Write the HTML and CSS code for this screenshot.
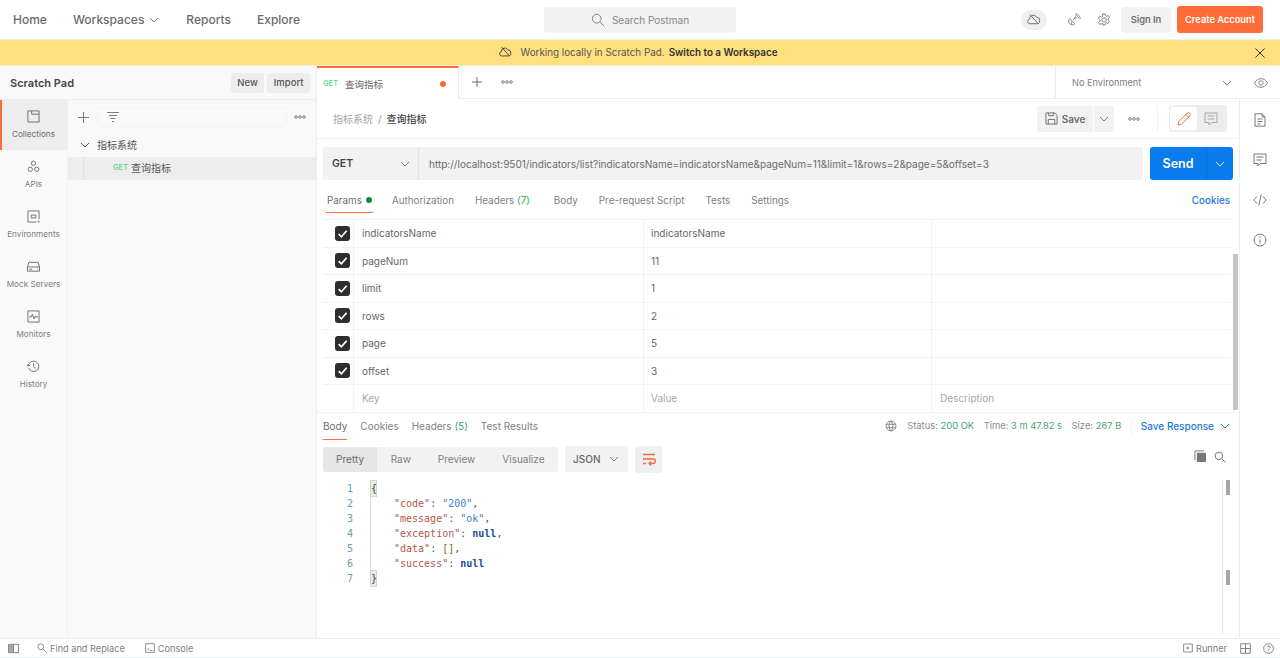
FILE: index.html
```html
<!DOCTYPE html>
<html lang="en">
<head>
<meta charset="utf-8">
<title>Postman</title>
<link rel="stylesheet" href="styles.css">
</head>
<body>
<div class="app">
  <header class="topbar">
    <nav class="topnav">
      <span class="navitem home">Home</span>
      <span class="navitem ws">Workspaces
        <svg class="chev10" viewBox="0 0 10 10"><path d="M1 3l4 4 4-4"/></svg>
      </span>
      <span class="navitem reports">Reports</span>
      <span class="navitem">Explore</span>
    </nav>
    <div class="search">
      <svg class="ic16" viewBox="0 0 16 16"><circle cx="6.5" cy="6.5" r="5"/><path d="M10.2 10.2l5 5"/></svg>
      <span>Search Postman</span>
    </div>
    <div class="topright">
      <span class="cloudpill">
        <svg class="ic16" viewBox="0 0 16 16"><path d="M4 12.500H3a2.500 2.500 0 0 1-.4-4.900A4.200 4.200 0 0 1 6.500 3.500c1.600 0 2.900.8 3.600 2a3.400 3.400 0 0 1 3.400 3.500 3.400 3.400 0 0 1-1.500 3.500H4zM3 2.500l9 10"/></svg>
      </span>
      <svg class="ic16 sat" viewBox="0 0 16 16"><path d="M3 6.500l6 6c-2 1.800-5 1.300-6.300-.6C1.500 10.200 1.500 8 3 6.500zM6 9.500l-2 4M7 8l2-2.500"/><path d="M9.500 2.500c2 .3 3.700 2 4 4M9.500 .8c3 .3 5.400 2.700 5.700 5.700"/><circle cx="9.500" cy="5.500" r="1"/></svg>
      <svg class="ic16 gear" viewBox="0 0 16 16"><circle cx="8" cy="8" r="2.500"/><path d="M6.700 1h2.600l.4 2 1.300.7 1.900-.7 1.300 2.300-1.500 1.300v1.600l1.500 1.300-1.300 2.300-1.900-.7-1.300.7-.4 2H6.700l-.4-2L5 12.300l-1.900.7-1.300-2.300 1.500-1.300V7.800L1.800 6.300l1.300-2.300 1.900.7 1.300-.7z"/></svg>
      <span class="signin">Sign In</span>
      <span class="create">Create Account</span>
    </div>
  </header>

  <div class="banner">
    <div class="banner-msg">
      <svg class="ic16 dark" viewBox="0 0 16 16"><path d="M4 12.500H3a2.500 2.500 0 0 1-.4-4.900A4.200 4.200 0 0 1 6.500 3.500c1.600 0 2.900.8 3.600 2a3.400 3.400 0 0 1 3.400 3.500 3.400 3.400 0 0 1-1.500 3.500H4zM3 2.500l9 10"/></svg>
      <span class="banner-text">Working locally in Scratch Pad.</span>
      <b>Switch to a Workspace</b>
    </div>
    <svg class="banner-x" viewBox="0 0 10 10"><path d="M.5.500l9 9M9.500.500l-9 9"/></svg>
  </div>

  <div class="body">
    <aside class="sidebar">
      <div class="side-head">
        <span class="side-title">Scratch Pad</span>
        <span class="mini-btn">New</span>
        <span class="mini-btn">Import</span>
      </div>
      <div class="side-main">
        <div class="rail">
          <div class="rail-item active">
            <svg class="ic14" viewBox="0 0 14 14"><path d="M1 1h12v12H1zM5 1v3.500h8"/></svg>
            <span>Collections</span>
          </div>
          <div class="rail-item">
            <svg class="ic14" viewBox="0 0 14 14"><circle cx="7" cy="3.500" r="2.300"/><circle cx="3.500" cy="10" r="2.300"/><circle cx="10.500" cy="10" r="2.300"/></svg>
            <span>APIs</span>
          </div>
          <div class="rail-item">
            <svg class="ic14" viewBox="0 0 14 14"><path d="M10 13H1V1h12v9M4.500 5.500h5v3h-5z"/><circle cx="12.500" cy="12.500" r="1" class="fill"/></svg>
            <span>Environments</span>
          </div>
          <div class="rail-item">
            <svg class="ic14" viewBox="0 0 14 14"><path d="M.5 7.500l1.500-5h10l1.500 5v4.500H.5zM.5 7.500h13M2.500 10h3M11 9.800h.5"/></svg>
            <span>Mock Servers</span>
          </div>
          <div class="rail-item">
            <svg class="ic14" viewBox="0 0 14 14"><path d="M1 1h12v12H1zM2.500 7.500h2l1.200-3 2 5 1.300-3 .8 1h2"/></svg>
            <span>Monitors</span>
          </div>
          <div class="rail-item">
            <svg class="ic14" viewBox="0 0 14 14"><path d="M1.800 8.500A5.600 5.600 0 1 0 2.500 3.700L1 6.500M0 4.500l1 2 2.500-.8M7 3.500V7l2.500 2"/></svg>
            <span>History</span>
          </div>
        </div>
        <div class="tree">
          <div class="tree-tools">
            <svg class="plus" viewBox="0 0 12 12"><path d="M6 0v12M0 6h12"/></svg>
            <div class="filter">
              <svg class="ic12" viewBox="0 0 12 12"><path d="M0 1.500h12M2 4.500h8M3.500 7.500h5M5 10.500h2"/></svg>
            </div>
            <svg class="dots" viewBox="0 0 12 4"><circle cx="2" cy="2" r="1.300"/><circle cx="6" cy="2" r="1.300"/><circle cx="10" cy="2" r="1.300"/></svg>
          </div>
          <div class="tree-folder">
            <svg class="chev10 darker" viewBox="0 0 10 10"><path d="M1 3l4 4 4-4"/></svg>
            <span>指标系统</span>
          </div>
          <div class="tree-req">
            <span class="get">GET</span>
            <span>查询指标</span>
          </div>
        </div>
      </div>
    </aside>

    <main class="center">
      <div class="tabbar">
        <div class="tab">
          <span class="get">GET</span>
          <span class="tab-name">查询指标</span>
          <span class="tab-dot"></span>
        </div>
        <svg class="plus tab-plus" viewBox="0 0 12 12"><path d="M6 1v10M1 6h10"/></svg>
        <svg class="dots" viewBox="0 0 12 4"><circle cx="2" cy="2" r="1.300"/><circle cx="6" cy="2" r="1.300"/><circle cx="10" cy="2" r="1.300"/></svg>
        <div class="env">
          <span>No Environment</span>
          <svg class="chev10" viewBox="0 0 10 10"><path d="M1 3l4 4 4-4"/></svg>
        </div>
        <div class="env-eye">
          <svg class="ic14 wide" viewBox="0 0 14 14"><path d="M.5 7C2 4 4.300 2.700 7 2.700S12 4 13.500 7C12 10 9.700 11.300 7 11.300S2 10 .5 7z"/><circle cx="7" cy="7" r="2.200"/></svg>
        </div>
      </div>

      <div class="workspace">
        <div class="req">
          <div class="crumbs">
            <span class="crumb-muted">指标系统</span>
            <span class="crumb-sep">/</span>
            <span class="crumb-cur">查询指标</span>
            <div class="crumb-actions">
              <span class="save">
                <svg class="ic14" viewBox="0 0 14 14"><path d="M1 1h9.500L13 3.500V13H1zM3.500 13V8h7v5M4 1v3h5V1"/></svg>
                Save
              </span>
              <span class="save-more"><svg class="chev10" viewBox="0 0 10 10"><path d="M1 3l4 4 4-4"/></svg></span>
              <svg class="dots crumb-dots" viewBox="0 0 12 4"><circle cx="2" cy="2" r="1.300"/><circle cx="6" cy="2" r="1.300"/><circle cx="10" cy="2" r="1.300"/></svg>
              <span class="crumb-divider"></span>
              <div class="modes">
                <span class="mode on"><svg class="ic14 orange" viewBox="0 0 14 14"><path d="M1 13l.8-3.500L10 1.300a1.500 1.500 0 0 1 2.700 2.700L4.500 12.200zM8.800 2.500l2.700 2.700"/></svg></span>
                <span class="mode"><svg class="ic14 pale" viewBox="0 0 14 14"><path d="M1 1h12v9.500H7.500L5 13v-2.500H1zM3.500 4h7M3.500 7h7"/></svg></span>
              </div>
            </div>
          </div>

          <div class="urlrow">
            <div class="method">
              <span>GET</span>
              <svg class="chev10" viewBox="0 0 10 10"><path d="M1 3l4 4 4-4"/></svg>
            </div>
            <div class="url">http://localhost:9501/indicators/list?indicatorsName=indicatorsName&amp;pageNum=11&amp;limit=1&amp;rows=2&amp;page=5&amp;offset=3</div>
            <div class="send">
              <span class="send-label">Send</span>
              <span class="send-more"><svg class="chev10 white" viewBox="0 0 10 10"><path d="M1 3l4 4 4-4"/></svg></span>
            </div>
          </div>

          <div class="reqtabs">
            <span class="rt active">Params<i class="green-dot"></i></span>
            <span class="rt">Authorization</span>
            <span class="rt">Headers <em>(7)</em></span>
            <span class="rt">Body</span>
            <span class="rt">Pre-request Script</span>
            <span class="rt">Tests</span>
            <span class="rt">Settings</span>
            <span class="cookies">Cookies</span>
          </div>

          <div class="params-wrap">
            <div class="params">
              <div class="prow"><span class="cb"><svg viewBox="0 0 10 10"><path d="M1.500 5.500l2.500 2.500 4.800-5.500"/></svg></span><span class="pk">indicatorsName</span><span class="pv">indicatorsName</span><span class="pd"></span></div>
              <div class="prow"><span class="cb"><svg viewBox="0 0 10 10"><path d="M1.500 5.500l2.500 2.500 4.800-5.500"/></svg></span><span class="pk">pageNum</span><span class="pv">11</span><span class="pd"></span></div>
              <div class="prow"><span class="cb"><svg viewBox="0 0 10 10"><path d="M1.500 5.500l2.500 2.500 4.800-5.500"/></svg></span><span class="pk">limit</span><span class="pv">1</span><span class="pd"></span></div>
              <div class="prow"><span class="cb"><svg viewBox="0 0 10 10"><path d="M1.500 5.500l2.500 2.500 4.800-5.500"/></svg></span><span class="pk">rows</span><span class="pv">2</span><span class="pd"></span></div>
              <div class="prow"><span class="cb"><svg viewBox="0 0 10 10"><path d="M1.500 5.500l2.500 2.500 4.800-5.500"/></svg></span><span class="pk">page</span><span class="pv">5</span><span class="pd"></span></div>
              <div class="prow"><span class="cb"><svg viewBox="0 0 10 10"><path d="M1.500 5.500l2.500 2.500 4.800-5.500"/></svg></span><span class="pk">offset</span><span class="pv">3</span><span class="pd"></span></div>
              <div class="prow ghost"><span class="cbx"></span><span class="pk">Key</span><span class="pv">Value</span><span class="pd">Description</span></div>
            </div>
            <div class="vscroll"><span class="vthumb"></span></div>
          </div>
        </div>

        <div class="resp">
          <div class="resptabs">
            <span class="rs active">Body</span>
            <span class="rs">Cookies</span>
            <span class="rs">Headers <em>(5)</em></span>
            <span class="rs">Test Results</span>
            <div class="meta">
              <svg class="ic14 globe" viewBox="0 0 14 14"><circle cx="7" cy="7" r="5.800"/><path d="M1.500 5h11M1.500 9h11M7 1.200c-3 3.500-3 8 0 11.600M7 1.200c3 3.500 3 8 0 11.600"/></svg>
              <span class="m">Status: <b>200 OK</b></span>
              <span class="m">Time: <b>3 m 47.82 s</b></span>
              <span class="m">Size: <b>267 B</b></span>
              <span class="meta-div"></span>
              <span class="save-resp">Save Response</span>
              <svg class="chev10 blue" viewBox="0 0 10 10"><path d="M1 3l4 4 4-4"/></svg>
            </div>
          </div>
          <div class="resptools">
            <div class="seg">
              <span class="seg-i on">Pretty</span>
              <span class="seg-i">Raw</span>
              <span class="seg-i">Preview</span>
              <span class="seg-i">Visualize</span>
            </div>
            <div class="fmt"><span>JSON</span><svg class="chev10" viewBox="0 0 10 10"><path d="M1 3l4 4 4-4"/></svg></div>
            <div class="wrapbtn"><svg class="ic14 orange wrapic" viewBox="0 0 14 14"><path d="M1 2.500h12M1 7h10.500c2.500 0 2.500 4.500 0 4.500H7M9 9.500l-2 2 2 2M1 11.500h3"/></svg></div>
            <div class="tool-right">
              <svg class="copy" viewBox="0 0 14 14"><path d="M1 11V1h10" class="thin"/><rect x="3" y="3" width="10" height="10" rx="1"/></svg>
              <svg class="ic14 srch" viewBox="0 0 16 16"><circle cx="6.500" cy="6.500" r="5"/><path d="M10.200 10.200l5 5"/></svg>
            </div>
          </div>
          <div class="code">
            <div class="gutter"><span>1</span><span>2</span><span>3</span><span>4</span><span>5</span><span>6</span><span>7</span></div>
            <div class="codelines">
              <div><span class="brace">{</span></div>
              <div class="ind"><span class="k">"code"</span>: <span class="s">"200"</span>,</div>
              <div class="ind"><span class="k">"message"</span>: <span class="s">"ok"</span>,</div>
              <div class="ind"><span class="k">"exception"</span>: <span class="n">null</span>,</div>
              <div class="ind"><span class="k">"data"</span>: <span class="a">[]</span>,</div>
              <div class="ind"><span class="k">"success"</span>: <span class="n">null</span></div>
              <div><span class="brace">}</span></div>
            </div>
            <div class="mini"><span class="mini-t"></span><span class="mini-b"></span></div>
          </div>
        </div>
      </div>
    </main>

    <aside class="rightrail">
      <svg class="ic14 rr" viewBox="0 0 14 14"><path d="M2 .8h7l3 3v9.400H2zM9 .8v3h3M4.500 6h5M4.500 8.500h5M4.500 11h3"/></svg>
      <svg class="ic14 rr" viewBox="0 0 14 14"><path d="M1 1h12v9.500H7.500L5 13v-2.500H1zM3.500 4h7M3.500 7h5"/></svg>
      <svg class="ic14 rr" viewBox="0 0 14 14"><path d="M4 3.500L.8 7 4 10.500M10 3.500L13.200 7 10 10.500M8.300 1.500L5.700 12.500"/></svg>
      <svg class="ic14 rr" viewBox="0 0 14 14"><circle cx="7" cy="7" r="6"/><path d="M7 6.300v4M7 3.500v1.200"/></svg>
    </aside>
  </div>

  <footer class="status">
    <svg class="ic12 panes" viewBox="0 0 12 12"><path d="M.5 1.500h11v9H.5zM6 1.500v9"/><path class="fillp" d="M1 2h4.500v8H1z"/></svg>
    <span class="st find"><svg class="ic12" viewBox="0 0 12 12"><circle cx="4.500" cy="4.500" r="3.500"/><path d="M7 7l4.500 4.500"/></svg>Find and Replace</span>
    <span class="st"><svg class="ic12" viewBox="0 0 12 12"><path d="M.8.800h10.400v10.400H.8zM3 6l1.500 1.500L3 9M6 9h3"/></svg>Console</span>
    <span class="st runner"><svg class="ic12" viewBox="0 0 12 12"><path d="M.8 1.200h10.400v9.600H.8z"/><path class="solid" d="M4.500 4l3 2-3 2z"/></svg>Runner</span>
    <svg class="ic12 twopane" viewBox="0 0 12 12"><path d="M.8.800h10.400v10.400H.8zM6 .8v10.400M.8 6h10.400"/></svg>
    <svg class="ic12 help" viewBox="0 0 12 12"><circle cx="6" cy="6" r="5.300"/><path d="M4.300 4.600C4.400 2.600 7.800 2.700 7.800 4.600 7.800 6 6 5.800 6 7.300M6 8.500v1"/></svg>
  </footer>
</div>
</body>
</html>
```
FILE: styles.css
```css
* { box-sizing: border-box; }
html, body { margin: 0; padding: 0; height: 100%; overflow: hidden; background: #fff; }
body { font-family: Inter, "Noto Sans CJK SC", "Liberation Sans", sans-serif; font-size: 10px; color: #6b6b6b; }
svg { fill: none; stroke: currentColor; stroke-width: 1; flex: none; display: block; }
.app { width: 1280px; height: 658px; display: flex; flex-direction: column; }
.ic16 { width: 16px; height: 16px; }
.ic14 { width: 14px; height: 14px; }
.ic12 { width: 12px; height: 12px; }
.chev10 { width: 10px; height: 10px; color: #808080; }
.chev10.darker { color: #555; }
.chev10.white { color: #fff; }
.chev10.blue { color: #1a78e0; }
.plus { width: 12px; height: 12px; color: #6b6b6b; }
.dots { width: 12px; height: 4px; color: #808080; }
.orange { color: #f26b3a; }
.pale { color: #a6a6a6; }
.dark { color: #333; }
.fill { fill: currentColor; stroke: none; }

/* top bar */
.topbar { height: 40px; flex: none; display: flex; align-items: center; position: relative; border-bottom: 1px solid #ededed; padding-left: 13px; }
.topnav { display: flex; align-items: center; font-size: 12px; font-weight: 500; color: #6b6b6b; }
.navitem { display: flex; align-items: center; }
.home { margin-right: 26px; }
.ws { margin-right: 27px; }
.ws .chev10 { margin-left: 5px; }
.reports { margin-right: 26px; }
.search { position: absolute; left: 544px; top: 7px; width: 192px; height: 26px; background: #f2f2f2; border-radius: 3px; display: flex; align-items: center; justify-content: center; gap: 7px; font-size: 10px; color: #868686; }
.search .ic16 { width: 14px; height: 14px; color: #777; }
.topright { margin-left: auto; display: flex; align-items: center; padding-right: 17px; }
.cloudpill { width: 26px; height: 20px; border-radius: 10px; background: #efefef; display: flex; align-items: center; justify-content: center; color: #6b6b6b; margin-right: 20px; }
.cloudpill .ic16 { width: 15px; height: 15px; }
.sat { width: 14px; height: 14px; margin-right: 16px; color: #777; }
.gear { width: 14px; height: 14px; margin-right: 10px; color: #777; }
.signin { width: 50px; height: 26px; background: #f2f2f2; border-radius: 3px; display: flex; align-items: center; justify-content: center; font-size: 9.300px; font-weight: 600; color: #6b6b6b; margin-right: 6px; }
.create { width: 86px; height: 27px; background: #ff6c37; border-radius: 3px; color: #fff; display: flex; align-items: center; justify-content: center; font-size: 9.300px; font-weight: 600; }

/* banner */
.banner { height: 26px; flex: none; background: #ffe07f; border-bottom: 1px solid #f3efe0; display: flex; align-items: center; justify-content: center; position: relative; font-size: 9.850px; color: #555; padding: 0 3px 1px 0; }
.banner-msg { display: flex; align-items: center; }
.banner-msg .ic16 { width: 14px; height: 14px; margin-right: 7px; }
.banner-msg b { font-weight: 600; color: #333; margin-left: 4px; }
.banner-x { position: absolute; right: 15px; top: 8px; width: 10px; height: 10px; color: #333; }

/* body */
.body { flex: 1; display: flex; min-height: 0; position: relative; }
.sidebar { width: 317px; flex: none; background: #f9f9f9; border-right: 1px solid #ededed; display: flex; flex-direction: column; }
.side-head { height: 34px; flex: none; display: flex; align-items: center; gap: 3px; padding: 0 6px 0 10px; border-bottom: 1px solid #ededed; }
.side-title { font-size: 11px; font-weight: 600; color: #444; margin-right: auto; }
.mini-btn { height: 20px; padding: 0 6.500px; background: #ededed; border-radius: 3px; display: flex; align-items: center; font-size: 9.500px; font-weight: 500; color: #555; }
.side-main { flex: 1; display: flex; min-height: 0; }
.rail { width: 68px; flex: none; border-right: 1px solid #f0f0f0; }
.rail-item { height: 50px; display: flex; flex-direction: column; align-items: center; justify-content: flex-start; padding-top: 10px; gap: 6px; font-size: 8.200px; line-height: 11px; color: #7e7e7e; }
.rail-item .ic14 { width: 13px; height: 13px; color: #6b6b6b; }
.rail-item.active { background: #ededed; border-left: 2px solid #ff6c37; padding-right: 2px; color: #6b6b6b; }
.tree { flex: 1; min-width: 0; }
.tree-tools { height: 34px; display: flex; align-items: center; padding: 0 10px 0 10px; }
.tree-tools .plus { width: 11px; height: 11px; }
.filter { width: 190px; height: 20px; margin-left: 8px; border: 1px solid #f2f2f2; border-radius: 3px; padding-left: 9px; display: flex; align-items: center; color: #808080; }
.tree-tools .dots { margin-left: auto; }
.tree-folder { height: 23px; display: flex; align-items: center; gap: 7px; padding: 0 0 2px 12px; font-size: 10px; color: #555; }
.tree-req { height: 23px; display: flex; align-items: center; gap: 3px; padding: 0 0 3px 45px; font-size: 10px; color: #555; background: linear-gradient(#e2e2e2, #e2e2e2) 15px 0 / 1px 100% no-repeat, #ededed; }
.get { color: #5fd08c; font-size: 7.500px; font-weight: 500; }

/* center */
.center { flex: 1; display: flex; flex-direction: column; min-width: 0; }
.tabbar { height: 33px; flex: none; display: flex; align-items: center; border-bottom: 1px solid #ededed; }
.tab { width: 142px; height: 33px; border-top: 2px solid #ff6c37; border-right: 1px solid #ededed; display: flex; align-items: center; padding: 1px 12px 0 6px; background: #fff; }
.tab-name { margin-left: 7px; font-size: 9.500px; color: #666; }
.tab-dot { width: 6px; height: 6px; border-radius: 50%; background: #ff6c37; margin-left: auto; }
.tab-plus { margin-left: 12px; margin-right: 18px; }
.env { margin-left: auto; width: 186px; height: 33px; border-left: 1px solid #ededed; display: flex; align-items: center; justify-content: space-between; padding: 1px 9px 0 16px; font-size: 9.200px; color: #808080; }
.env-eye { width: 39px; display: flex; justify-content: center; color: #8a8a8a; padding-top: 1px; }
.wide { width: 14px; height: 14px; }

.workspace { flex: 1; display: flex; flex-direction: column; min-height: 0; margin-right: 40px; border-right: 1px solid #ededed; }
.req { flex: none; height: 313px; display: flex; flex-direction: column; }
.crumbs { height: 40px; flex: none; display: flex; align-items: center; padding: 0 12px 0 16px; border-bottom: 1px solid #f2f2f2; font-size: 10px; }
.crumb-muted { color: #a6a6a6; }
.crumb-sep { color: #999; margin: 0 5px; }
.crumb-cur { color: #444; font-weight: 500; }
.crumb-actions { margin-left: auto; display: flex; align-items: center; }
.save { width: 56px; height: 26px; background: #f2f2f2; border-radius: 3px 0 0 3px; display: flex; align-items: center; justify-content: center; gap: 4px; font-size: 10px; font-weight: 600; color: #6b6b6b; }
.save .ic14 { width: 13px; height: 13px; }
.save-more { width: 20px; height: 26px; margin-left: 1px; background: #f2f2f2; border-radius: 0 3px 3px 0; display: flex; align-items: center; justify-content: center; }
.crumb-dots { margin: 0 17px 0 14px; }
.crumb-divider { width: 1px; height: 26px; background: #f2f2f2; margin-right: 11px; }
.modes { display: flex; padding: 2px 3px 2px 1px; height: 27px; width: 58px; background: #ededed; border-radius: 3px; }
.mode { flex: 1; display: flex; align-items: center; justify-content: center; border-radius: 3px; }
.mode.on { background: #fff; }
.urlrow { height: 33px; flex: none; margin: 8px 6px 0 6px; display: flex; }
.method { width: 96px; background: #f2f2f2; border-radius: 3px 0 0 3px; border-right: 1px solid #e2e2e2; display: flex; align-items: center; justify-content: space-between; padding: 0 8px 0 9px; font-size: 10.500px; font-weight: 600; color: #444; }
.url { flex: 1; background: #f2f2f2; border-radius: 0 3px 3px 0; display: flex; align-items: center; padding-left: 10px; font-size: 10.030px; color: #6b6b6b; white-space: nowrap; overflow: hidden; }
.send { width: 83px; margin-left: 7px; background: #097bed; border-radius: 3px; display: flex; color: #fff; }
.send-label { flex: 1; display: flex; align-items: center; justify-content: center; font-size: 12.500px; font-weight: 600; }
.send-more { width: 27px; display: flex; align-items: center; justify-content: center; border-left: 1px solid #086fd6; }
.reqtabs { height: 32px; flex: none; margin-top: 7px; padding: 0 9px 0 9px; display: flex; align-items: flex-start; font-size: 9.850px; color: #808080; gap: 19px; }
.rt { height: 26px; display: flex; align-items: center; padding: 0 1px; white-space: pre; border-bottom: 1px solid transparent; }
.rt:nth-child(2) { margin-left: -1px; }
.rt:nth-child(4) { margin-left: 3px; }
.rt.active { color: #6b6b6b; border-bottom: 1px solid #ff6c37; }
.rt em, .rs em { font-style: normal; color: #2fa868; }
.green-dot { width: 6px; height: 6px; border-radius: 50%; background: #0f8a45; margin-left: 4px; }
.cookies { margin-left: auto; height: 26px; display: flex; align-items: center; color: #1a78e0; font-weight: 500; }

.params-wrap { flex: 1; min-height: 0; display: flex; padding-left: 6px; }
.params { width: 908px; flex: none; border-top: 1px solid #f2f2f2; }
.prow { height: 27.500px; display: grid; grid-template-columns: 31px 290px 288px 1fr; border-bottom: 1px solid #f2f2f2; font-size: 10px; color: #666; align-items: stretch; }
.prow > span { display: flex; align-items: center; padding-left: 8px; border-right: 1px solid #f2f2f2; }
.prow > .pv { padding-left: 7px; }
.prow > .pd { border-right: 0; }
.prow > .cb { padding: 0 3px 0 0; justify-content: flex-end; }
.cb svg { width: 15px; height: 15px; padding: 2px; background: #2e2e2e; border-radius: 3px; color: #fff; stroke-width: 1.600; }
.ghost { color: #a6a6a6; }
.vscroll { flex: 1; position: relative; }
.vthumb { position: absolute; left: 2px; top: 35px; width: 5px; height: 156px; background: #c4c4c4; border-radius: 1px; }

.resp { flex: 1; min-height: 0; display: flex; flex-direction: column; border-top: 1px solid #f2f2f2; }
.resptabs { height: 27px; flex: none; display: flex; align-items: flex-start; padding: 0 9px 0 6px; font-size: 10px; color: #808080; gap: 13px; }
.rs { height: 27px; display: flex; align-items: center; white-space: pre; padding-bottom: 1px; }
.rs.active { color: #6b6b6b; border-bottom: 1px solid #ff6c37; }
.meta { margin-left: auto; height: 25px; display: flex; align-items: center; font-size: 9.400px; color: #8a8a8a; }
.globe { width: 12px; height: 12px; color: #777; margin-right: 10px; }
.m { margin-right: 9.500px; white-space: pre; }
.m b { font-weight: 400; color: #3fa66f; }
.meta-div { width: 1px; height: 16px; background: #f0f0f0; margin-right: 9px; }
.save-resp { color: #1a78e0; font-weight: 500; font-size: 10px; margin-right: 6px; }
.resptools { height: 28px; flex: none; margin-top: 5px; padding: 0 13px 0 6px; display: flex; align-items: center; }
.seg { display: flex; height: 25px; width: 235px; background: #f2f2f2; border-radius: 3px; font-size: 10px; color: #808080; }
.seg-i { display: flex; align-items: center; padding: 0 13.500px 1px; }
.seg-i.on { background: #e6e6e6; color: #6b6b6b; border-radius: 3px 0 0 3px; width: 57px; justify-content: center; padding: 0 0 1px; }
.fmt { margin-left: 7px; width: 63px; height: 26px; background: #f2f2f2; border-radius: 3px; display: flex; align-items: center; justify-content: space-between; padding: 0 9px 1px 8px; font-size: 10px; font-weight: 500; color: #666; }
.wrapbtn { margin-left: 7px; width: 27px; height: 27px; background: #f0f0f0; border-radius: 3px; display: flex; align-items: center; justify-content: center; }
.wrapic { width: 14px; height: 14px; stroke-width: 1.300; }
.tool-right { margin-left: auto; display: flex; align-items: center; gap: 7px; color: #666; padding-bottom: 5px; }
.copy { width: 13px; height: 13px; color: #777; }
.copy rect { fill: #777; stroke: none; }
.srch { width: 12px; height: 12px; stroke-width: 1.200; }
.code { flex: 1; min-height: 0; display: flex; margin-top: 7px; font-family: "DejaVu Sans Mono", "Liberation Mono", monospace; font-size: 10px; line-height: 15px; position: relative; }
.gutter { width: 36px; flex: none; padding-top: 1px; display: flex; flex-direction: column; align-items: flex-end; color: #6d9bb3; }
.codelines { margin-left: 17px; padding-top: 1px; border-left: 1px solid #ddd; color: #555; height: 105px; }
.codelines > div { height: 15px; white-space: pre; }
.ind { padding-left: 23px; }
.brace { display: inline-block; width: 5px; background: #e6ede6; outline: 1px solid #cfd8cf; color: #444; }
.k { color: #b5554d; }
.s { color: #3e82c4; }
.n { color: #1d4f95; font-weight: 600; }
.a { color: #8a6a2a; }
.mini { position: absolute; right: 7px; top: 0; bottom: 5px; width: 6px; border-left: 1px solid #e0e0e0; box-sizing: content-box; padding-left: 3px; display: flex; flex-direction: column; padding-bottom: 48px; }
.mini-t, .mini-b { display: block; width: 4px; height: 15px; background: #a6a6a6; }
.mini-b { margin-top: auto; }

.rightrail { position: absolute; right: 0; top: 33px; width: 40px; display: flex; flex-direction: column; align-items: center; padding-top: 14px; gap: 26px; color: #777; }
.rr { width: 14px; height: 14px; }

/* status */
.status { height: 20px; flex: none; display: flex; align-items: center; padding: 0 6px 0 8px; border-top: 1px solid #ededed; border-bottom: 1px solid #e8eef5; font-size: 9.200px; color: #808080; }
.status svg { color: #777; }
.panes { width: 11px; height: 11px; }
.fillp { fill: #a8a8a8; stroke: none; }
.st { display: flex; align-items: center; gap: 3px; }
.st .ic12 { width: 10px; height: 10px; }
.find { margin-left: 18px; margin-right: 20px; }
.runner { margin-left: auto; margin-right: 13px; }
.solid { fill: #777; stroke: none; }
.twopane { width: 11px; height: 11px; margin-right: 12px; }
.help { width: 11px; height: 11px; }
```
